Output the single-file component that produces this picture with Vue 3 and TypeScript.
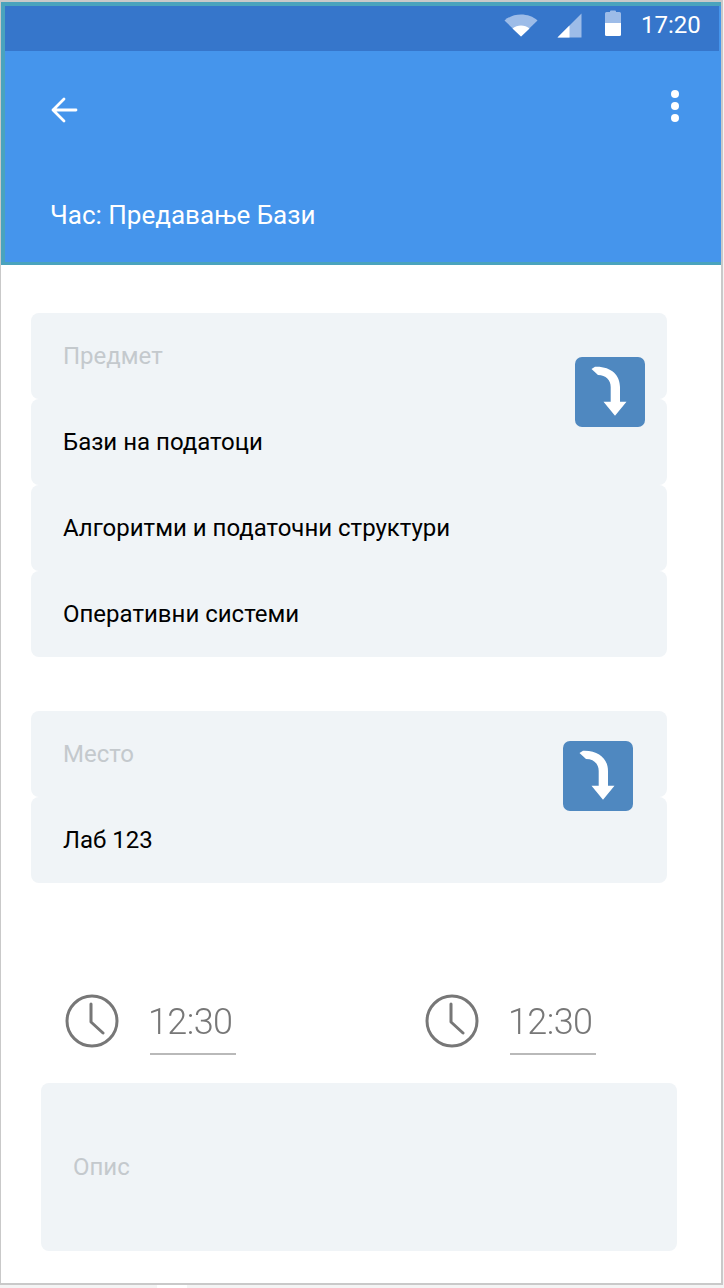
<template>
  <div class="screen">
    <header class="head">
      <div class="status">
        <svg class="wifi" width="34" height="24" viewBox="0 0 34 24">
          <path d="M0.5 7.5C9 -0.5 25 -0.5 33.5 7.5L17 23.5Z" fill="#9dbce8" />
          <path d="M8.5 15.5C13 11.5 21 11.5 25.5 15.5L17 23.5Z" fill="#fff" />
        </svg>
        <svg class="signal" width="25" height="25" viewBox="0 0 25 25">
          <path d="M0.5 24.5L24.5 0.5V24.5Z" fill="#9dbce8" />
          <path d="M0.5 24.5L12.5 12.5V24.5Z" fill="#fff" />
        </svg>
        <svg class="battery" width="16" height="26" viewBox="0 0 16 26">
          <path d="M5 1.5Q5 0.5 6 0.5H10Q11 0.5 11 1.5V2H14.5Q16 2 16 3.5V13H0V3.5Q0 2 1.5 2H5Z" fill="#9dbce8" />
          <path d="M0 13H16V24.5Q16 26 14.5 26H1.5Q0 26 0 24.5Z" fill="#fff" />
        </svg>
        <span class="clock-text">17:20</span>
      </div>
      <div class="bar">
        <div class="bar-top">
          <svg class="back" width="28" height="26" viewBox="0 0 28 26" fill="none" stroke="#fff" stroke-width="2.8" stroke-linecap="round" stroke-linejoin="round">
            <path d="M25 13H2M13 2L2 13L13 24" />
          </svg>
          <div class="dots"><i></i><i></i><i></i></div>
        </div>
        <h1>Час: Предавање Бази</h1>
      </div>
    </header>

    <section class="group first">
      <div v-for="(item, i) in subjects" :key="item" class="row" :class="{ label: i === 0 }">{{ item }}</div>
      <button class="drop drop-a">
        <svg width="70" height="70" viewBox="0 0 70 70"><path :d="arrow" fill="#fff" /></svg>
      </button>
    </section>

    <section class="group second">
      <div v-for="(item, i) in places" :key="item" class="row" :class="{ label: i === 0 }">{{ item }}</div>
      <button class="drop drop-b">
        <svg width="70" height="70" viewBox="0 0 70 70"><path :d="arrow" fill="#fff" /></svg>
      </button>
    </section>

    <div class="times">
      <div v-for="n in 2" :key="n" class="time">
        <svg width="56" height="56" viewBox="0 0 56 56" fill="none" stroke="#777" stroke-width="3" stroke-linecap="round" stroke-linejoin="round">
          <circle cx="28" cy="28" r="25" />
          <path d="M27 11V29L39 40" />
        </svg>
        <span class="time-value">12:30</span>
      </div>
    </div>

    <div class="desc">Опис</div>
  </div>
  <div class="scrap"></div>
</template>

<script setup lang="ts">
const subjects = ["Предмет", "Бази на податоци", "Алгоритми и податочни структури", "Оперативни системи"];
const places = ["Место", "Лаб 123"];

// curved arrow used on both dropdown buttons
const arrow = "M16.5 12L20 9.7C36 9 45 18 45 30V44.7H51.5L40 58.7L28.5 44.7H35.7V30C35.7 23 31 18 23 18Z";
</script>

<style>
html, body { margin: 0; background: #f4f4f4; }
</style>

<style scoped>
.screen {
  position: relative;
  box-sizing: border-box;
  width: 723px;
  height: 1285px;
  background: #fff;
  border: solid #c9c9c9;
  border-width: 2px 2px 2px 1px;
  font-family: Roboto, "Noto Sans", sans-serif;
  overflow: hidden;
}
.head {
  box-sizing: border-box;
  height: 263px;
  border: solid #4aa3bd;
  border-width: 4px 0 3px 4px;
  background: #4595ec;
}
.status {
  box-sizing: border-box;
  height: 45px;
  margin-right: 2px;
  background: #3676cb;
  position: relative;
}
.wifi { position: absolute; left: 499px; top: 7px; }
.signal { position: absolute; left: 552px; top: 7px; }
.battery { position: absolute; left: 600px; top: 4px; }
.clock-text {
  position: absolute;
  left: 636px;
  top: 5px;
  font-size: 24px;
  line-height: 28px;
  color: #fff;
}
.bar { padding: 0 0 0 45px; }
.bar-top {
  display: flex;
  justify-content: space-between;
  align-items: flex-start;
  height: 112px;
}
.back { margin: 46px 0 0 1px; }
.dots {
  display: flex;
  flex-direction: column;
  gap: 4px;
  margin: 39px 42px 0 0;
}
.dots i {
  display: block;
  width: 8px;
  height: 8px;
  border-radius: 50%;
  background: #fff;
}
h1 {
  margin: 0;
  padding-top: 36px;
  font-size: 26px;
  line-height: 32px;
  font-weight: 400;
  color: #fff;
}
.group {
  position: relative;
  width: 636px;
  margin-left: 30px;
}
.first { margin-top: 48px; }
.second { margin-top: 54px; }
.row {
  box-sizing: border-box;
  height: 86px;
  padding: 0 32px;
  display: flex;
  align-items: center;
  background: #f0f4f7;
  border-radius: 8px;
  font-size: 24px;
  color: #000;
}
.row.label { color: #c4c9cd; }
.drop {
  position: absolute;
  padding: 0;
  width: 70px;
  height: 70px;
  border: 0;
  border-radius: 7px;
  background: #4f88c0;
}
.drop svg { display: block; }
.drop-a { left: 544px; top: 44px; }
.drop-b { left: 532px; top: 30px; }
.times {
  display: grid;
  grid-template-columns: 360px 1fr;
  margin: 110px 0 0 63px;
}
.time {
  display: flex;
  align-items: flex-start;
  gap: 30px;
  filter: blur(0.6px);
}
.time-value {
  display: block;
  width: 86px;
  height: 53px;
  margin-top: 7px;
  border-bottom: 2px solid #b9b9b9;
  text-indent: -2px;
  font-family: Roboto, sans-serif;
  font-weight: 300;
  letter-spacing: -0.6px;
  font-size: 36px;
  line-height: 44px;
  color: #777;
}
.desc {
  box-sizing: border-box;
  width: 636px;
  height: 168px;
  margin: 28px 0 0 40px;
  padding: 0 32px;
  display: flex;
  align-items: center;
  background: #f0f4f7;
  border-radius: 8px;
  font-size: 24px;
  color: #c4c9cd;
}
.scrap {
  position: absolute;
  left: 157px;
  top: 1285px;
  width: 30px;
  height: 3px;
  background: #fff;
}
</style>
